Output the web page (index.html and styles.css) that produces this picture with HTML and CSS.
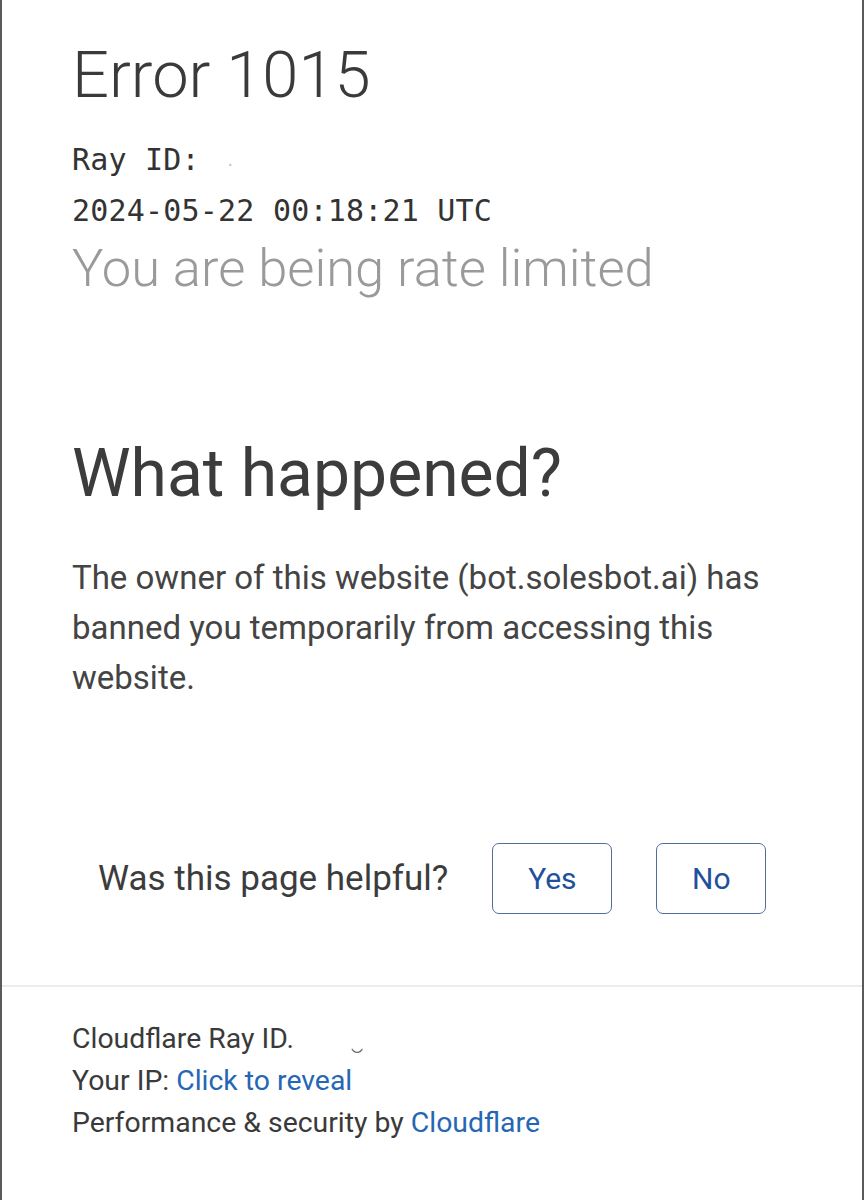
FILE: index.html
```html
<!DOCTYPE html>
<html lang="en">
<head>
<meta charset="utf-8">
<title>Error 1015</title>
<link rel="stylesheet" href="styles.css">
</head>
<body>
<div class="frame">
  <header class="header">
    <h1 class="title">Error 1015</h1>
    <div class="mono mono-first">Ray ID: <span class="redact">·</span></div>
    <div class="mono">2024-05-22 00:18:21 UTC</div>
    <h2 class="subtitle">You are being rate limited</h2>
  </header>
  <section class="what">
    <h2 class="what-title">What happened?</h2>
    <p class="what-text">The owner of this website (bot.solesbot.ai) has banned you temporarily from accessing this website.</p>
  </section>
  <div class="feedback">
    <span class="feedback-q">Was this page helpful?</span>
    <button class="btn btn-yes">Yes</button>
    <button class="btn btn-no">No</button>
  </div>
  <footer class="footer">
    <div class="footer-line">Cloudflare Ray ID. <span class="redact-mark">‿</span></div>
    <div class="footer-line">Your IP: <a class="link">Click to reveal</a></div>
    <div class="footer-line">Performance &amp; security by <a class="link">Cloudflare</a></div>
  </footer>
</div>
</body>
</html>
```
FILE: styles.css
```css
html, body {
  margin: 0;
  padding: 0;
  background: #ffffff;
}
.frame {
  box-sizing: border-box;
  height: 1200px;
  border-left: 2px solid #5a5a5a;
  border-right: 2px solid #5a5a5a;
  font-family: Roboto, "Liberation Sans", sans-serif;
  color: #404040;
  overflow: hidden;
}
.header {
  padding: 44px 0 0 70px;
}
.title {
  margin: 0;
  font-size: 65px;
  line-height: 63px;
  font-weight: 300;
  color: #3a3a3a;
}
.mono {
  font-family: "DejaVu Sans Mono", "Liberation Mono", monospace;
  font-size: 30px;
  line-height: 51px;
  letter-spacing: 0.2px;
  color: #333333;
}
.mono-first {
  margin-top: 27px;
}
.redact {
  color: #bbbbbb;
  font-size: 14px;
  line-height: 1;
  margin-left: 8px;
}
.subtitle {
  margin: 2px 0 0;
  font-size: 52.5px;
  line-height: 60px;
  font-weight: 300;
  color: #9a9a9a;
}
.what {
  padding: 141px 0 0 70px;
}
.what-title {
  margin: 0;
  font-size: 66px;
  line-height: 70px;
  font-weight: 400;
  color: #3c3c3c;
}
.what-text {
  margin: 44px 0 0;
  width: 720px;
  font-size: 33px;
  line-height: 50px;
  color: #444444;
}
.feedback {
  display: flex;
  align-items: center;
  padding: 140px 0 0 96px;
}
.feedback-q {
  font-size: 35px;
  color: #3c3c3c;
  margin-right: 44px;
}
.btn {
  box-sizing: border-box;
  height: 71px;
  background: #ffffff;
  border: 1.5px solid #4f6e9c;
  border-radius: 7px;
  font-family: Roboto, "Liberation Sans", sans-serif;
  font-size: 30px;
  color: #23509a;
  padding: 0;
}
.btn-yes {
  width: 120px;
  margin-right: 44px;
}
.btn-no {
  width: 110px;
}
.footer {
  margin-top: 71px;
  border-top: 2px solid #ececec;
  padding: 31px 0 0 70px;
}
.footer-line {
  font-size: 28.4px;
  line-height: 42px;
  color: #3a3a3a;
}
.link {
  color: #2567b3;
  text-decoration: none;
}
.redact-mark {
  font-size: 20px;
  line-height: 1;
  color: #555;
  margin-left: 50px;
}
```
